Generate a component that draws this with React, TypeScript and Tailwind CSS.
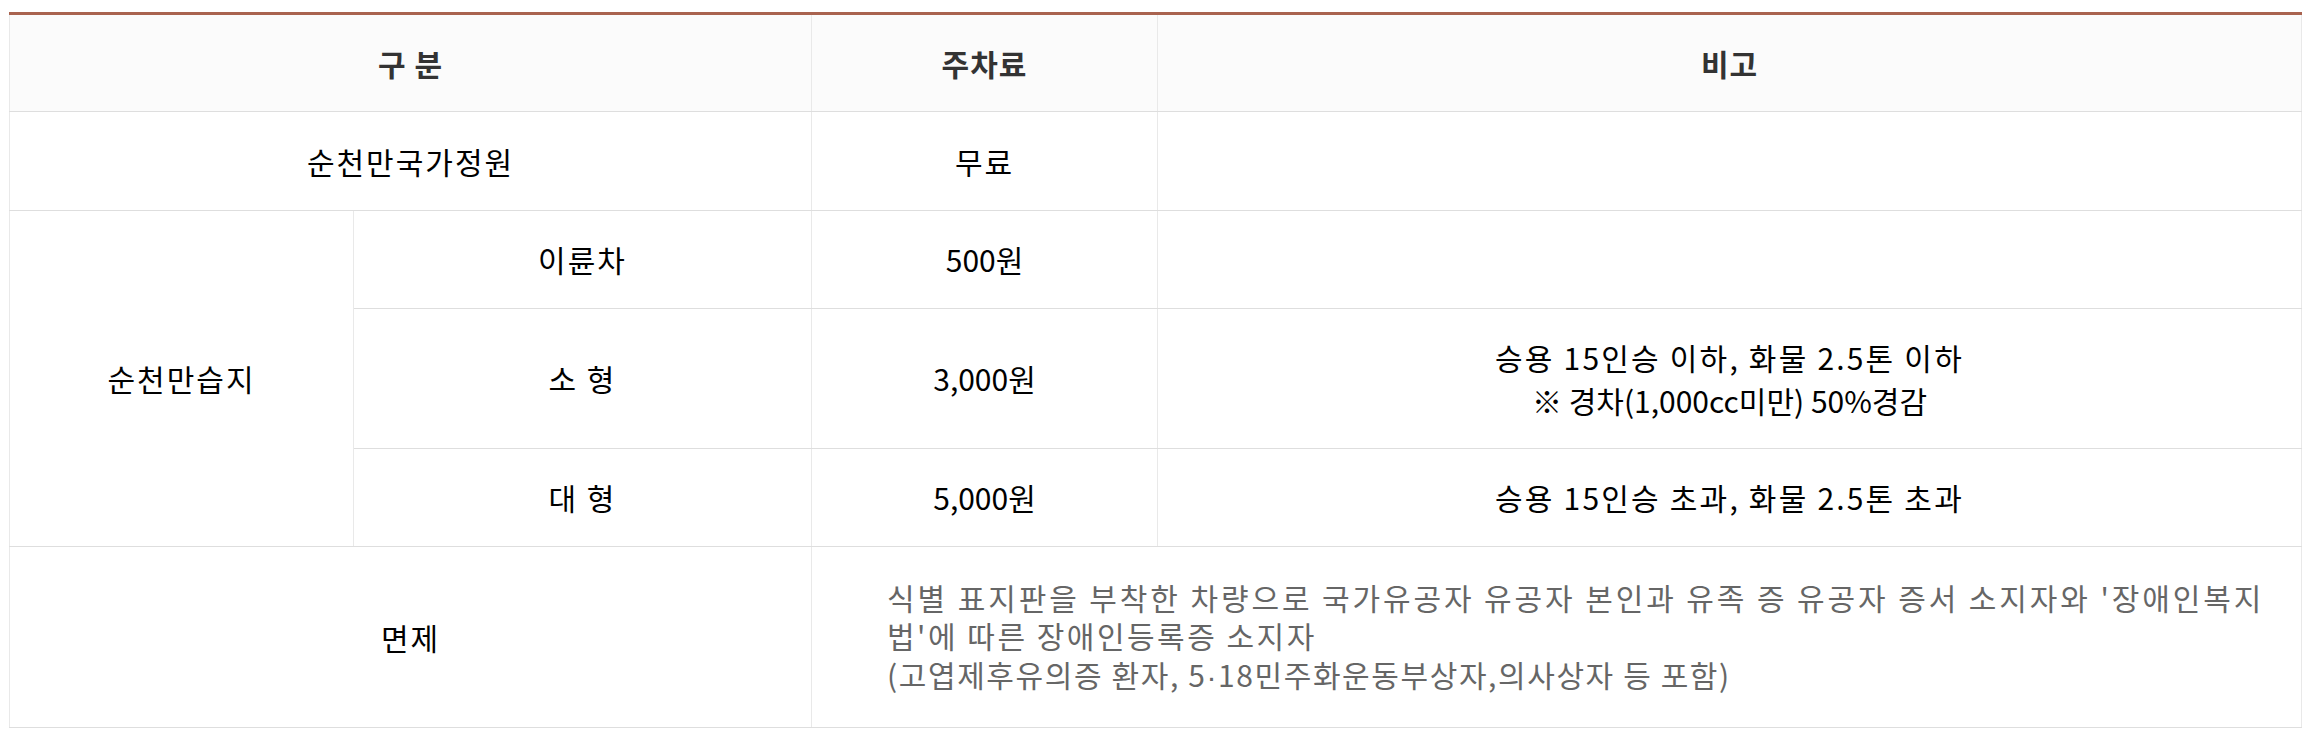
export default function App() {
  const bd = "border-b border-r border-b-[#dedede] border-r-[#e9e9e9]";
  return (
    <div className="w-[2312px] h-[739px] bg-white pt-[12px] pl-[9px] font-['Noto_Sans_CJK_KR','Noto_Sans',sans-serif] text-[30px] text-black">
      <table className="table-fixed border-collapse w-[2292px] border-t-[3px] border-t-[#a9634f] border-l border-l-[#e9e9e9]">
        <colgroup>
          <col className="w-[344px]" />
          <col className="w-[458px]" />
          <col className="w-[346px]" />
          <col className="w-[1144px]" />
        </colgroup>
        <tbody>
          <tr className="h-[98px]">
            <th colSpan={2} className="bg-[#fbfbfb] border-b border-r border-b-[#dedede] border-r-[#e9e9e9] font-bold text-[#333] leading-[40px] tracking-[1px]">구 분</th>
            <th className="bg-[#fbfbfb] border-b border-r border-b-[#dedede] border-r-[#e9e9e9] font-bold text-[#333] leading-[40px] tracking-[1px]">주차료</th>
            <th className="bg-[#fbfbfb] border-b border-r border-b-[#dedede] border-r-[#e9e9e9] font-bold text-[#333] leading-[40px] tracking-[1px]">비고</th>
          </tr>
          <tr className="h-[99px]">
            <td colSpan={2} className={`${bd} text-center leading-[43px] tracking-[2px]`}>순천만국가정원</td>
            <td className={`${bd} text-center leading-[43px] tracking-[2px]`}>무료</td>
            <td className={`${bd} text-center leading-[43px]`}></td>
          </tr>
          <tr className="h-[98px]">
            <td rowSpan={3} className={`${bd} text-center leading-[43px] tracking-[2px]`}>순천만습지</td>
            <td className={`${bd} text-center leading-[43px] tracking-[2px]`}>이륜차</td>
            <td className={`${bd} text-center leading-[43px]`}>500원</td>
            <td className={`${bd} text-center leading-[43px]`}></td>
          </tr>
          <tr className="h-[140px]">
            <td className={`${bd} text-center leading-[43px] tracking-[2px]`}>소 형</td>
            <td className={`${bd} text-center leading-[43px]`}>3,000원</td>
            <td className={`${bd} text-center leading-[43px]`}>
              <div className="tracking-[2.2px]">승용 15인승 이하, 화물 2.5톤 이하</div>
              <div className="tracking-[0px]">※ 경차(1,000cc미만) 50%경감</div>
            </td>
          </tr>
          <tr className="h-[98px]">
            <td className={`${bd} text-center leading-[43px] tracking-[2px]`}>대 형</td>
            <td className={`${bd} text-center leading-[43px]`}>5,000원</td>
            <td className={`${bd} text-center leading-[43px] tracking-[2.2px]`}>승용 15인승 초과, 화물 2.5톤 초과</td>
          </tr>
          <tr className="h-[181px]">
            <td colSpan={2} className={`${bd} text-center leading-[43px] tracking-[2px]`}>면제</td>
            <td colSpan={2} className={`${bd} text-left pl-[75px] text-[#666] leading-[38.5px]`}>
              <div className="whitespace-nowrap tracking-[2.9px]">식별 표지판을 부착한 차량으로 국가유공자 유공자 본인과 유족 증 유공자 증서 소지자와 '장애인복지</div>
              <div className="whitespace-nowrap tracking-[2.5px]">법'에 따른 장애인등록증 소지자</div>
              <div className="whitespace-nowrap tracking-[1.6px]">
                (고엽제후유의증 환자, 5<span className="font-['Liberation_Sans',sans-serif]">·</span>18민주화운동부상자,의사상자 등 포함)
              </div>
            </td>
          </tr>
        </tbody>
      </table>
    </div>
  );
}
